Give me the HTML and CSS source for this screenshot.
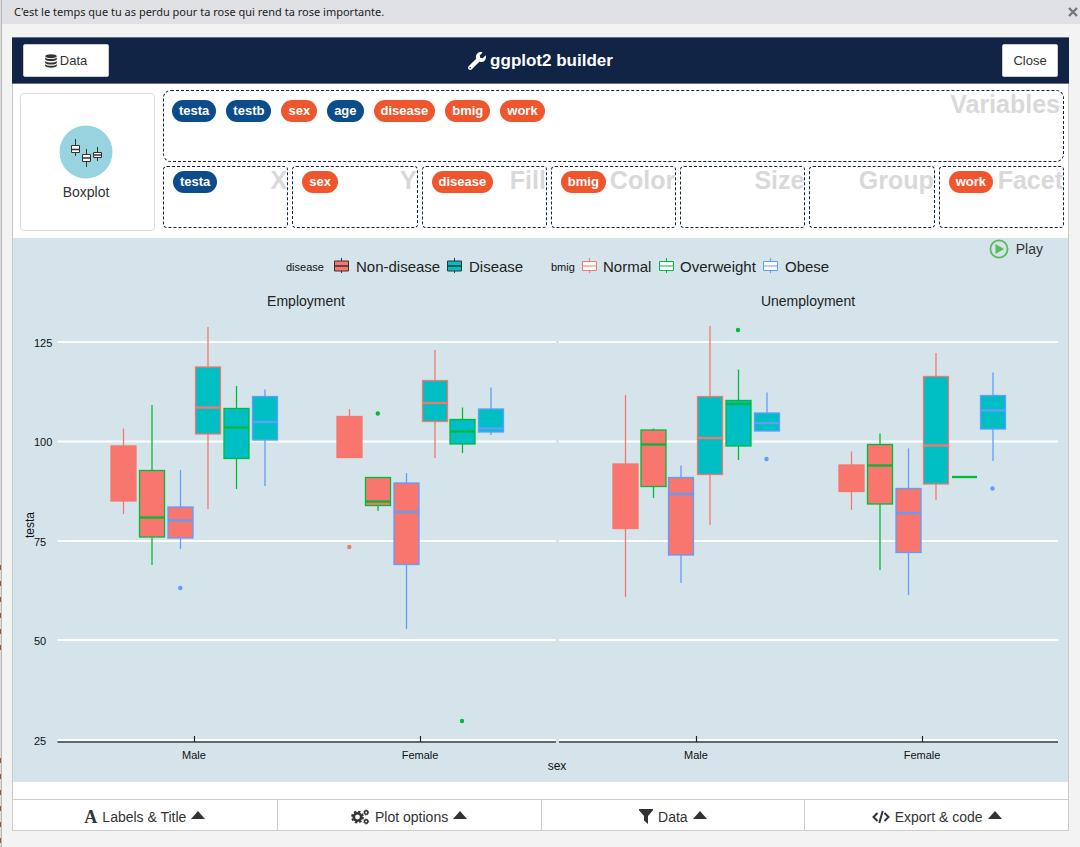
FILE: index.html
```
<!DOCTYPE html>
<html lang="en">
<head>
<meta charset="utf-8">
<title>ggplot2 builder</title>
<link rel="stylesheet" href="styles.css">
</head>
<body>
<div class="edge" aria-hidden="true"><div class="specks specks-a"></div><div class="specks specks-b"></div></div>
<div class="window">
  <div class="titlebar">
    <span>C'est le temps que tu as perdu pour ta rose qui rend ta rose importante.</span>
    <button class="window-close" type="button" aria-label="Close window"><svg width="10" height="10" viewBox="0 0 10 10"><path d="M1 1l8 8M9 1l-8 8" stroke="#777" stroke-width="2.4"/></svg></button>
  </div>
  <main class="builder">
    <header class="header">
      <button class="btn btn-data" type="button"><svg width="12" height="14" viewBox="0 0 12 14" fill="#333"><ellipse cx="6" cy="2.2" rx="5.8" ry="2"/><path d="M.2 3.6c2 2 9.600 2 11.600 0v2c-1.500 2-10.100 2-11.600 0zM.2 7c2 2 9.600 2 11.600 0v2c-1.500 2-10.100 2-11.600 0zM.2 10.300c2 2 9.600 2 11.600 0v1.700c-1.500 2.300-10.100 2.300-11.600 0z"/></svg>Data</button>
      <h1 class="title"><svg width="18" height="18" viewBox="0 0 512 512" fill="#fff"><path d="M507.730 109.100c-2.240-9.030-13.540-12.090-20.120-5.510l-74.360 74.360-67.880-11.310-11.310-67.880 74.360-74.360c6.620-6.620 3.430-17.900-5.660-20.160-47.380-11.740-99.550.910-136.580 37.930-39.640 39.640-50.550 97.100-34.050 147.200L18.740 402.760c-24.990 24.990-24.990 65.510 0 90.500 24.990 24.990 65.510 24.990 90.500 0l213.210-213.210c50.120 16.710 107.470 5.680 147.370-34.220 37.070-37.070 49.700-89.320 37.910-136.730zM64 472c-13.250 0-24-10.750-24-24 0-13.260 10.750-24 24-24s24 10.740 24 24c0 13.250-10.750 24-24 24z"/></svg>ggplot2 builder</h1>
      <button class="btn btn-close" type="button">Close</button>
    </header>

    <section class="mapping">
      <button class="geom" type="button">
        <svg width="54" height="54" viewBox="0 0 54 54">
          <circle cx="27" cy="27" r="26.500" fill="#98d4e0"/>
          <g fill="#fff" stroke="#333" stroke-width="1">
            <path d="M16.500 14v17M27.500 24v18M38.500 22v14"/>
            <path d="M12.500 20.500h8v7h-8zM23.500 29.500h8v7h-8zM34.500 27.500h8v5h-8z"/>
            <path d="M12.500 24.500h8M23.500 33h8M34.500 30h8" stroke-width="1.500"/>
          </g>
        </svg>
        <span>Boxplot</span>
      </button>
      <div class="zones">
        <div class="zone zone-source">
          <span class="zone-name">Variables</span>
          <span class="pill num">testa</span><span class="pill num">testb</span><span class="pill cat">sex</span><span class="pill num">age</span><span class="pill cat">disease</span><span class="pill cat">bmig</span><span class="pill cat">work</span>
        </div>
        <div class="targets">
          <div class="zone"><span class="zone-name">X</span><span class="pill num">testa</span></div>
          <div class="zone"><span class="zone-name">Y</span><span class="pill cat">sex</span></div>
          <div class="zone"><span class="zone-name">Fill</span><span class="pill cat">disease</span></div>
          <div class="zone"><span class="zone-name">Color</span><span class="pill cat">bmig</span></div>
          <div class="zone"><span class="zone-name">Size</span></div>
          <div class="zone"><span class="zone-name">Group</span></div>
          <div class="zone"><span class="zone-name">Facet</span><span class="pill cat">work</span></div>
        </div>
      </div>
    </section>

    <section class="plot">
      <button class="play" type="button"><svg width="20" height="20" viewBox="0 0 20 20"><circle cx="10" cy="10" r="8.600" fill="none" stroke="#5cb85c" stroke-width="1.800"/><path d="M6.500 5l8.500 5-8.500 5z" fill="#5cb85c"/></svg>Play</button>
      <svg class="chart" viewBox="13 238 1055 544" role="img" aria-label="Boxplot of testa by sex, disease, bmig and work">
        <g class="t15">
          <text x="356" y="272">Non-disease</text><text x="469" y="272">Disease</text>
          <text x="603" y="272">Normal</text><text x="680" y="272">Overweight</text><text x="785" y="272">Obese</text>
        </g>
        <g class="t14">
          <text x="306" y="306" class="mid">Employment</text><text x="808" y="306" class="mid">Unemployment</text>
        </g>
        <g class="t11">
          <text x="286" y="271">disease</text><text x="551" y="271">bmig</text>
          <text x="34" y="347">125</text><text x="34" y="446">100</text><text x="34" y="546">75</text><text x="34" y="645">50</text><text x="34" y="745">25</text>
          <text x="194" y="759" class="mid">Male</text><text x="420" y="759" class="mid">Female</text><text x="696" y="759" class="mid">Male</text><text x="922" y="759" class="mid">Female</text>
        </g>
        <g class="t12">
          <text x="557" y="770" class="mid">sex</text>
          <text class="mid" transform="translate(34 525) rotate(-90)">testa</text>
        </g>
        <g stroke-width="1">
          <g stroke="#333"><path d="M341.500 258v15M454.500 258v15"/><path fill="#f8766d" d="M334.500 261h14v10h-14z"/><path fill="#00bfc4" d="M447.500 261h14v10h-14z"/><path d="M334 266h15M447 266h15" stroke-width="1.500"/></g>
          <g fill="#fff">
            <path stroke="#f8766d" d="M589.500 258v3M589.500 271v2M582.500 261.500h14v9h-14zM582 266h15"/>
            <path stroke="#00ba38" d="M666.500 258v3M666.500 271v2M659.500 261.500h14v9h-14zM659 266h15"/>
            <path stroke="#619cff" d="M770.500 258v3M770.500 271v2M763.500 261.500h14v9h-14zM763 266h15"/>
          </g>
        </g>
        <path d="M57.500 342H556M559 342h499M57.500 441.500H556M559 441.500h499M57.500 541H556M559 541h499M57.500 640H556M559 640h499M57.500 740H556M559 740h499" stroke="#fff" stroke-width="2"/>
        <path d="M57.500 742H556M559 742h499" stroke="#333f44" stroke-width="1.500"/>
        <path d="M194.500 736v6M420.500 736v6M696.500 736v6M922.500 736v6" stroke="#222" stroke-width="1.200"/>
        <g id="boxes"></g>
      </svg>
    </section>

    <nav class="panels">
      <button type="button"><span class="icon-font" aria-hidden="true">A</span>Labels &amp; Title<i class="caret"></i></button>
      <button type="button"><svg width="19" height="16" viewBox="0 0 19 16"><circle cx="6.500" cy="8" r="3.700" fill="none" stroke="#333" stroke-width="2.600"/><circle cx="6.500" cy="8" r="5.500" fill="none" stroke="#333" stroke-width="1.800" stroke-dasharray="2.400 1.920"/><g fill="none" stroke="#333"><circle cx="15.200" cy="3.500" r="1.700" stroke-width="1.400"/><circle cx="15.200" cy="3.500" r="2.500" stroke-width=".8" stroke-dasharray="1.200 .763"/><circle cx="15.200" cy="12.500" r="1.700" stroke-width="1.400"/><circle cx="15.200" cy="12.500" r="2.500" stroke-width=".8" stroke-dasharray="1.200 .763"/></g></svg>Plot options<i class="caret"></i></button>
      <button type="button"><svg width="14" height="15" viewBox="0 0 14 15"><path d="M0 0h14v1.200L9 7v8l-4-3.500V7L0 1.200z" fill="#333"/></svg>Data<i class="caret"></i></button>
      <button type="button"><svg width="18" height="14" viewBox="0 0 18 14"><path d="M5.500 3L1.500 7l4 4M12.500 3l4 4-4 4M10.700 1L7.300 13" fill="none" stroke="#333" stroke-width="2"/></svg>Export &amp; code<i class="caret"></i></button>
    </nav>
  </main>
</div>
<script src="chart.js"></script>
</body>
</html>
```
FILE: styles.css
```
* { box-sizing: border-box; }
body { margin: 0; min-height: 100vh; display: flex; background: #f3f3f3; color: #333; font: 14px/20px "Liberation Sans", Arial, sans-serif; }
button { font: inherit; color: inherit; border: 0; background: none; padding: 0; cursor: pointer; }
svg { flex: none; display: block; }

.edge { width: 2px; flex: none; background: #dcdcdc; border-right: 1px solid #b8b8b8; display: flex; flex-direction: column; padding-top: 565px; gap: 103px; }
.specks { width: 1px; background: repeating-linear-gradient(#a0522d 0 5px, #ddd 5px 16px); }
.specks-a { height: 90px; }
.specks-b { height: 86px; }
.window { flex: 1; min-width: 0; }
.titlebar { height: 24px; background: #e0e1e5; display: flex; align-items: center; justify-content: space-between; padding: 0 2px 0 12px; font: 11px/16px "Noto Sans", "Open Sans", sans-serif; color: #222; }
.builder { margin: 13px 11px 16px 10px; border: 1px solid #c8c8c8; border-top: 0; background: #fff; }

.header { display: grid; grid-template-columns: 1fr auto 1fr; align-items: center; height: 47px; margin: 0 -1px; padding: 0 11px; background: #112446; border: 1px solid #65708a; border-width: 1px 0; }
.btn { height: 33px; background: #fff; border: 1px solid #ccc; border-radius: 2px; font-size: 13px; display: flex; align-items: center; justify-content: center; gap: 3px; }
.btn-data { width: 86px; }
.btn-close { width: 56px; justify-self: end; }
.title { margin: 0; display: flex; align-items: center; gap: 4px; color: #fff; font-size: 17px; line-height: 20px; }

.mapping { display: flex; gap: 8px; padding: 6px 4px 7px 7px; }
.geom { flex: none; width: 135px; margin-top: 3px; padding: 2px 3px 0 0; border: 1px solid #ddd; border-radius: 4px; display: flex; flex-direction: column; align-items: center; justify-content: center; gap: 3px; }
.zones { flex: 1; min-width: 0; display: flex; flex-direction: column; gap: 4px; padding-bottom: 3px; }
.zone { position: relative; height: 62px; padding: 4px 9px; border: 1px dashed #112446; border-radius: 4px; display: flex; gap: 10px; align-items: flex-start; overflow: hidden; }
.zone-source { height: 72px; padding: 9px 8px; border-radius: 8px; }
.targets { display: grid; grid-template-columns: repeat(7, 1fr); gap: 4px; }
.zone-name { position: absolute; top: 0; right: 0; font-size: 25px; line-height: 26px; font-weight: bold; color: #d9d9d9; }
.zone-source .zone-name { right: 3px; }
.pill { position: relative; height: 22px; padding: 0 7px; border-radius: 11px; color: #fff; font-size: 13px; line-height: 21px; font-weight: bold; }
.num { background: #0c4c8a; }
.cat { background: #ef562d; }

.plot { position: relative; background: #d5e4eb; }
.play { position: absolute; top: 1px; right: 25px; display: flex; align-items: center; gap: 7px; }
.chart { width: 100%; height: auto; fill: #222; }
.t15 { font-size: 15px; }
.t14 { font-size: 14px; }
.t12 { font-size: 12px; }
.t11 { font-size: 11px; }
.t12, .t11 { fill: #111; }
.mid { text-anchor: middle; }

.panels { display: grid; grid-template-columns: repeat(4, 1fr); margin: 17px -1px -1px; border: 1px solid #ccc; }
.panels button { height: 30px; display: flex; align-items: center; justify-content: center; gap: 5px; padding-top: 3px; }
.panels button + button { border-left: 1px solid #ccc; }
.icon-font { font: bold 18px/20px "Liberation Serif", serif; }
.caret { border: 7px solid transparent; border-top: 0; border-bottom: 8px solid #333; margin-top: -3px; }
```
FILE: chart.js
```
const RED = '#f8766d', GREEN = '#00ba38', BLUE = '#619cff', TEAL = '#00bfc4';

// fill, stroke, left, top, bottom, median, whisker top, whisker bottom
const boxes = [
  [RED, RED, 111, 446, 501, 480, 428.5, 514],
  [RED, GREEN, 139.5, 470.5, 537, 517.5, 405, 565],
  [RED, BLUE, 168, 507, 538, 520.5, 470, 549],
  [TEAL, RED, 195.5, 367, 434, 407.5, 327, 509],
  [TEAL, GREEN, 224, 408.5, 458.5, 427.5, 386, 489],
  [TEAL, BLUE, 252.5, 396.5, 440, 422, 389.5, 486],
  [RED, RED, 337, 416.5, 457.5, 440, 409, 457],
  [RED, GREEN, 365.5, 477.5, 505.5, 501.5, 477, 511],
  [RED, BLUE, 394, 483, 564.5, 512, 473, 629],
  [TEAL, RED, 422.5, 380.5, 421.5, 403, 350, 458],
  [TEAL, GREEN, 450, 419.5, 444, 431.5, 407.5, 453],
  [TEAL, BLUE, 478.5, 409, 432, 428.5, 387.5, 435],
  [RED, RED, 613, 464, 528.5, 500, 395, 597],
  [RED, GREEN, 641, 430, 486.5, 444.5, 428.5, 498],
  [RED, BLUE, 668.5, 477.5, 555, 494, 465.5, 583],
  [TEAL, RED, 697.5, 396.5, 474.5, 438, 326, 525],
  [TEAL, GREEN, 726, 400.5, 446, 404, 369.5, 460],
  [TEAL, BLUE, 754.5, 413, 431, 423, 392.5, 431],
  [RED, RED, 839, 465, 491.5, 480, 451.5, 510],
  [RED, GREEN, 867.5, 444.5, 504, 465.5, 433.5, 570],
  [RED, BLUE, 896, 488.5, 552.5, 513, 448.5, 595],
  [TEAL, RED, 923.5, 376.5, 484, 445.5, 353, 500],
  [TEAL, GREEN, 952, 477, 477, 477, 477, 477],
  [TEAL, BLUE, 980.5, 395.5, 429, 410.5, 372.5, 461]
];

const outliers = [
  [BLUE, 180.3, 588], [RED, 349.3, 547], [GREEN, 377.8, 413.5], [GREEN, 462, 721],
  [GREEN, 738, 330], [BLUE, 766.5, 459], [BLUE, 992.5, 488.5]
];

const width = 25;
const marks = boxes.map(([fill, stroke, x, top, bottom, median, high, low]) => `
  <g stroke="${stroke}" stroke-width="1.3">
    <path d="M${x + width / 2} ${high}V${low}"/>
    <rect x="${x}" y="${top}" width="${width}" height="${bottom - top}" fill="${fill}"/>
    <path d="M${x} ${median}h${width}" stroke-width="2.3"/>
  </g>`);
const dots = outliers.map(([fill, x, y]) => `<circle cx="${x}" cy="${y}" r="2.2" fill="${fill}"/>`);
document.getElementById('boxes').innerHTML = marks.join('') + dots.join('');
```
